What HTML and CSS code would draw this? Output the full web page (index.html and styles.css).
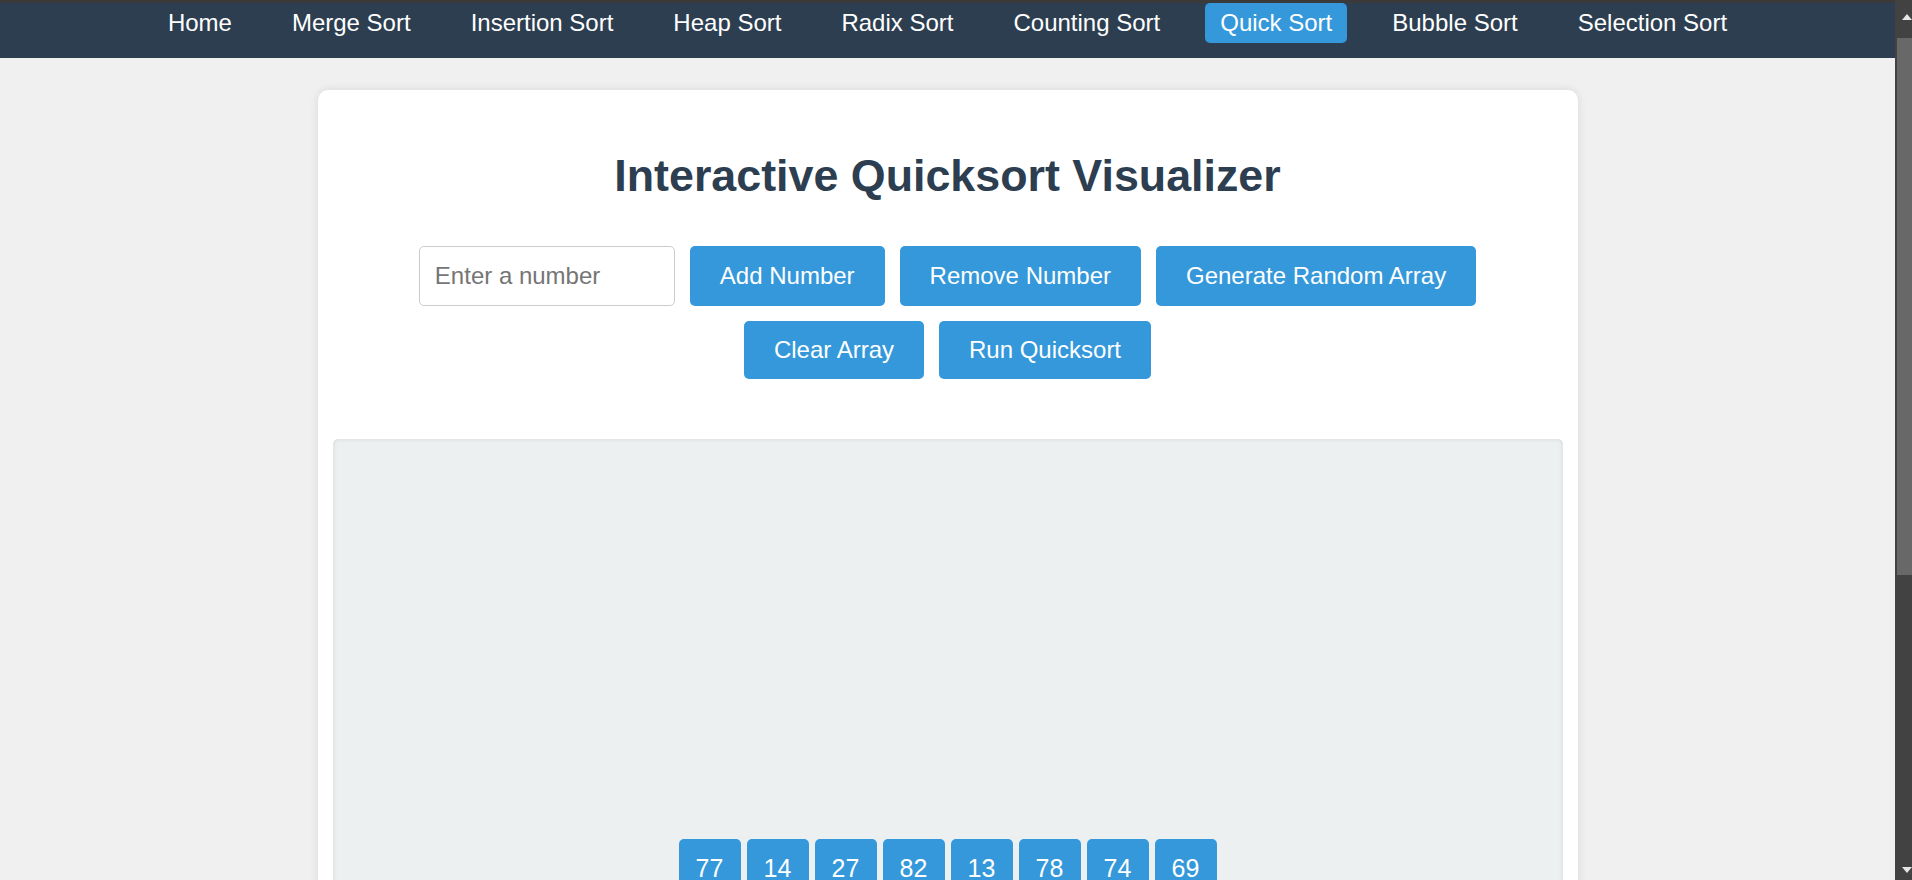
FILE: index.html
```html
<!DOCTYPE html>
<html lang="en">
<head>
<meta charset="utf-8">
<title>Interactive Quicksort Visualizer</title>
<link rel="stylesheet" href="styles.css">
</head>
<body>
<div class="topline"></div>
<nav class="nav">
  <a class="nav-link" href="#">Home</a>
  <a class="nav-link" href="#">Merge Sort</a>
  <a class="nav-link" href="#">Insertion Sort</a>
  <a class="nav-link" href="#">Heap Sort</a>
  <a class="nav-link" href="#">Radix Sort</a>
  <a class="nav-link" href="#">Counting Sort</a>
  <a class="nav-link active" href="#">Quick Sort</a>
  <a class="nav-link" href="#">Bubble Sort</a>
  <a class="nav-link" href="#">Selection Sort</a>
</nav>
<main class="card">
  <h1 class="title">Interactive Quicksort Visualizer</h1>
  <div class="controls">
    <input class="num-input" type="number" placeholder="Enter a number">
    <button class="btn">Add Number</button>
    <button class="btn">Remove Number</button>
    <button class="btn">Generate Random Array</button>
    <button class="btn">Clear Array</button>
    <button class="btn">Run Quicksort</button>
  </div>
  <div class="viz">
    <div class="bar" style="height: 423.5px">77</div>
    <div class="bar" style="height: 77px">14</div>
    <div class="bar" style="height: 148.5px">27</div>
    <div class="bar" style="height: 451px">82</div>
    <div class="bar" style="height: 71.5px">13</div>
    <div class="bar" style="height: 429px">78</div>
    <div class="bar" style="height: 407px">74</div>
    <div class="bar" style="height: 379.5px">69</div>
  </div>
</main>
<div class="scrollbar" aria-hidden="true">
  <svg class="sb-arrow sb-up" width="10" height="6" viewBox="0 0 10 6"><polygon points="0,6 5,0 10,6" fill="#e6e6e6"/></svg>
  <div class="sb-thumb"></div>
  <svg class="sb-arrow sb-down" width="10" height="6" viewBox="0 0 10 6"><polygon points="0,0 10,0 5,6" fill="#e6e6e6"/></svg>
</div>
</body>
</html>
```
FILE: styles.css
```css
* { box-sizing: border-box; }

html { background: #f0f0f0; }

body {
  margin: 0 17px 0 0;
  background: #f0f0f0;
  font-family: "Liberation Sans", Arial, sans-serif;
  color: #333;
}

.topline {
  height: 3px;
  background: #3a3a3a;
}

.nav {
  height: 55px;
  background: #2c3e50;
  display: flex;
  justify-content: center;
  align-items: flex-start;
  gap: 30px;
}

.nav-link {
  color: #fff;
  text-decoration: none;
  font-size: 24px;
  line-height: normal;
  padding: 6px 15px;
  border-radius: 5px;
}

.nav-link.active { background: #3498db; }

.card {
  display: block;
  width: 1260px;
  margin: 32px auto 31px;
  background: #fff;
  border-radius: 10px;
  padding: 15px;
  box-shadow: 0 0 10px rgba(0, 0, 0, 0.1);
}

.title {
  margin: 44.8px 0;
  font-size: 44.8px;
  font-weight: bold;
  line-height: normal;
  color: #2c3e50;
  text-align: center;
}

.controls {
  display: flex;
  flex-wrap: wrap;
  justify-content: center;
  gap: 15px;
  margin-bottom: 60px;
}

.num-input {
  width: 256px;
  height: 60px;
  padding: 15px;
  font-family: "Liberation Sans", Arial, sans-serif;
  font-size: 24px;
  border: 1px solid #ccc;
  border-radius: 5px;
  color: #333;
  background: #fff;
}

.num-input::placeholder { color: #757575; }

.btn {
  background: #3498db;
  color: #fff;
  border: none;
  border-radius: 5px;
  padding: 15px 30px;
  font-family: "Liberation Sans", Arial, sans-serif;
  font-size: 24px;
  line-height: normal;
}

.viz {
  height: 867px;
  background: #ecf0f1;
  border-radius: 5px;
  box-shadow: inset 0 0 5px rgba(0, 0, 0, 0.1);
  display: flex;
  justify-content: center;
  align-items: flex-start;
  gap: 6px;
  padding: 400px 15px 15px;
}

.bar {
  width: 62px;
  background: #3498db;
  color: #fff;
  font-size: 25px;
  line-height: normal;
  text-align: center;
  padding-top: 15px;
  border-radius: 5px 5px 0 0;
}

.scrollbar {
  position: fixed;
  top: 0;
  right: 0;
  width: 17px;
  height: 100vh;
  background: #424242;
}

.sb-arrow {
  position: absolute;
  right: 0;
  display: block;
}

.sb-up { top: 14px; }
.sb-down { bottom: 7px; }

.sb-thumb {
  position: absolute;
  top: 38px;
  left: 2px;
  right: 0;
  height: 537px;
  background: #686868;
}
```
